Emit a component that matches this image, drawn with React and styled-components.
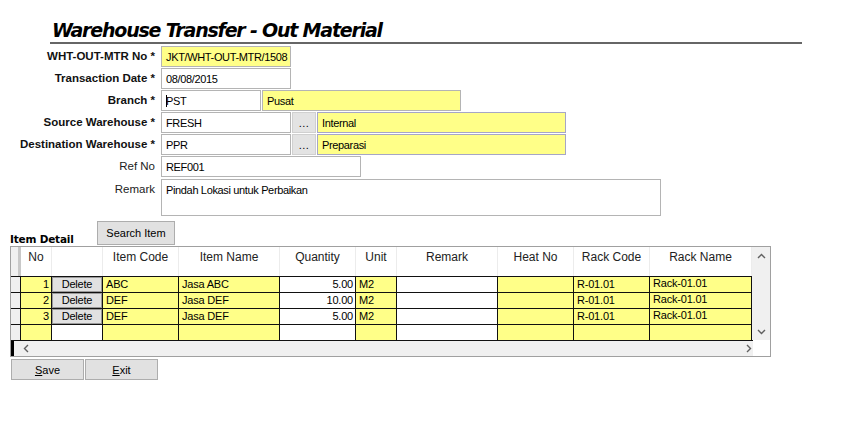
import React from 'react';
import styled, { createGlobalStyle } from 'styled-components';

const GlobalStyle = createGlobalStyle`
  html, body {
    margin: 0;
    padding: 0;
    background: #fff;
    font-family: "Liberation Sans", Arial, sans-serif;
    font-size: 11px;
    color: #000;
  }
`;

const YELLOW = '#ffff88';

const columns = [
    { key: 'no', title: 'No', width: 31, align: 'right', fill: YELLOW },
    { key: 'del', title: '', width: 51, fill: '#fff' },
    { key: 'code', title: 'Item Code', width: 76, fill: YELLOW },
    { key: 'name', title: 'Item Name', width: 101, fill: YELLOW },
    { key: 'qty', title: 'Quantity', width: 76, align: 'right', fill: '#fff' },
    { key: 'unit', title: 'Unit', width: 41, fill: YELLOW },
    { key: 'remark', title: 'Remark', width: 101, fill: '#fff' },
    { key: 'heat', title: 'Heat No', width: 76, fill: YELLOW },
    { key: 'rack', title: 'Rack Code', width: 76, fill: YELLOW },
    { key: 'rackName', title: 'Rack Name', width: 102, fill: YELLOW, raise: true },
];

const rows = [
    { no: '1', code: 'ABC', name: 'Jasa ABC', qty: '5.00', unit: 'M2', remark: '', heat: '', rack: 'R-01.01', rackName: 'Rack-01.01' },
    { no: '2', code: 'DEF', name: 'Jasa DEF', qty: '10.00', unit: 'M2', remark: '', heat: '', rack: 'R-01.01', rackName: 'Rack-01.01' },
    { no: '3', code: 'DEF', name: 'Jasa DEF', qty: '5.00', unit: 'M2', remark: '', heat: '', rack: 'R-01.01', rackName: 'Rack-01.01' },
    { blank: true },
];

const Chevron = ({ dir }) => {
    const pts = {
        up: '1,6 4.5,2.5 8,6',
        down: '1,3 4.5,6.5 8,3',
        left: '6,1 2.5,4.5 6,8',
        right: '3,1 6.5,4.5 3,8',
    }[dir];
    return (
        <svg width="9" height="9" viewBox="0 0 9 9">
            <polyline points={pts} fill="none" stroke="#606060" strokeWidth="1.4" />
        </svg>
    );
};

const App = () => {
    return (
        <Page>
            <GlobalStyle />
            <Header>
                <Title>Warehouse Transfer - Out Material</Title>
            </Header>

            <Form>
                <Label $bold>WHT-OUT-MTR No *</Label>
                <Fields>
                    <Input $w={130} $fill={YELLOW}>JKT/WHT-OUT-MTR/1508</Input>
                </Fields>

                <Label $bold>Transaction Date *</Label>
                <Fields>
                    <Input $w={130}>08/08/2015</Input>
                </Fields>

                <Label $bold>Branch *</Label>
                <Fields>
                    <Input $w={100}><Caret />PST</Input>
                    <Input $w={199} $fill={YELLOW} $gap={1}>Pusat</Input>
                </Fields>

                <Label $bold>Source Warehouse *</Label>
                <Fields>
                    <Input $w={130}>FRESH</Input>
                    <DotsButton>...</DotsButton>
                    <Input $w={249} $fill={YELLOW} $blue>Internal</Input>
                </Fields>

                <Label $bold>Destination Warehouse *</Label>
                <Fields>
                    <Input $w={130}>PPR</Input>
                    <DotsButton>...</DotsButton>
                    <Input $w={249} $fill={YELLOW} $blue>Preparasi</Input>
                </Fields>

                <Label>Ref No</Label>
                <Fields>
                    <Input $w={200}>REF001</Input>
                </Fields>

                <Label $top>Remark</Label>
                <Fields>
                    <TextArea>Pindah Lokasi untuk Perbaikan</TextArea>
                </Fields>
            </Form>

            <DetailBar>
                <SectionTitle>Item Detail</SectionTitle>
                <GreyButton $w={78} $h={24}>Search Item</GreyButton>
            </DetailBar>

            <GridPanel>
                <GridMain>
                    <GridBody>
                        <HeaderRow>
                            <RowHeadCell $head />
                            {columns.map((c) => (
                                <HeadCell key={c.key} $w={c.width}>{c.title}</HeadCell>
                            ))}
                        </HeaderRow>
                        {rows.map((r, i) => (
                            <DataRow key={i}>
                                <RowHeadCell />
                                {columns.map((c) => (
                                    <Cell
                                        key={c.key}
                                        $w={c.width}
                                        $fill={c.fill}
                                        $align={c.align}
                                        $raise={c.raise}
                                    >
                                        {c.key === 'del'
                                            ? !r.blank && <DeleteButton>Delete</DeleteButton>
                                            : r[c.key]}
                                    </Cell>
                                ))}
                            </DataRow>
                        ))}
                    </GridBody>
                    <VScroll>
                        <Chevron dir="up" />
                        <Chevron dir="down" />
                    </VScroll>
                </GridMain>
                <HScroll>
                    <Marker />
                    <Chevron dir="left" />
                    <Spacer />
                    <Chevron dir="right" />
                </HScroll>
            </GridPanel>

            <Actions>
                <GreyButton $w={73} $h={21}><u>S</u>ave</GreyButton>
                <GreyButton $w={73} $h={21}><u>E</u>xit</GreyButton>
            </Actions>
        </Page>
    );
};

const Page = styled.div`
    width: 850px;
    height: 425px;
    overflow: hidden;
    padding-top: 18px;
    box-sizing: border-box;
`;

const Header = styled.div`
    margin-left: 50px;
    width: 750px;
    border-bottom: 2px solid #666;
    padding-left: 2px;
`;

const Title = styled.h1`
    margin: 0;
    font-family: "DejaVu Sans", Verdana, sans-serif;
    font-weight: bold;
    font-style: italic;
    font-size: 19px;
    line-height: 24px;
    letter-spacing: -1.2px;
    color: #000;
`;

const Form = styled.div`
    display: grid;
    grid-template-columns: 156px 1fr;
    row-gap: 1px;
    margin-top: 2px;
`;

const Label = styled.div`
    text-align: right;
    padding-right: 1px;
    font-size: 11.5px;
    font-weight: ${(p) => (p.$bold ? 'bold' : 'normal')};
    color: ${(p) => (p.$bold ? '#111' : '#222')};
    line-height: 21px;
    align-self: ${(p) => (p.$top ? 'start' : 'center')};
    padding-top: ${(p) => (p.$top ? '1px' : '0')};
    white-space: nowrap;
`;

const Fields = styled.div`
    display: flex;
    align-items: stretch;
    padding-left: 5px;
`;

const Input = styled.div`
    width: ${(p) => p.$w}px;
    height: 21px;
    box-sizing: border-box;
    margin-left: ${(p) => p.$gap || 0}px;
    border: 1px solid ${(p) => (p.$blue ? '#a6a6c6' : '#b4b4b4')};
    background: ${(p) => p.$fill || '#fff'};
    padding-left: 4px;
    display: flex;
    align-items: center;
    font-size: 11px;
    letter-spacing: -0.35px;
    white-space: nowrap;
    overflow: hidden;
`;

const Caret = styled.span`
    display: inline-block;
    width: 1px;
    height: 12px;
    background: #000;
    margin-right: -1px;
`;

const DotsButton = styled.div`
    width: 24px;
    height: 21px;
    box-sizing: border-box;
    margin: 0 1px;
    background: #e3e3e3;
    border: 1px solid #d0d0d0;
    display: flex;
    align-items: center;
    justify-content: center;
    font-size: 11px;
    letter-spacing: 0.5px;
`;

const TextArea = styled.div`
    width: 500px;
    height: 37px;
    margin-top: 1px;
    box-sizing: border-box;
    border: 1px solid #b4b4b4;
    padding: 4px 4px;
    font-size: 11px;
    letter-spacing: -0.35px;
`;

const DetailBar = styled.div`
    display: flex;
    align-items: flex-end;
    margin-top: 4px;
    padding-left: 10px;
    height: 25px;
`;

const SectionTitle = styled.div`
    font-family: "DejaVu Sans", Verdana, sans-serif;
    font-weight: bold;
    font-size: 10.5px;
    width: 87px;
    line-height: 12px;
    margin-bottom: 0;
    letter-spacing: -0.2px;
`;

const GreyButton = styled.div`
    width: ${(p) => p.$w}px;
    height: ${(p) => p.$h}px;
    box-sizing: border-box;
    background: #e1e1e1;
    border: 1px solid #adadad;
    display: flex;
    align-items: center;
    justify-content: center;
    font-size: 11px;
    u {
        text-decoration: underline;
    }
`;

const GridPanel = styled.div`
    margin-left: 10px;
    margin-top: 1px;
    width: 761px;
    box-sizing: border-box;
    border: 1px solid #a0a0a0;
    display: flex;
    flex-direction: column;
`;

const GridMain = styled.div`
    display: flex;
`;

const GridBody = styled.div`
    display: flex;
    flex-direction: column;
`;

const HeaderRow = styled.div`
    display: flex;
    height: 29px;
    background: #fff;
`;

const DataRow = styled.div`
    display: flex;
    height: 16px;
    box-sizing: border-box;
    border-top: 1px solid #111;
`;

const RowHeadCell = styled.div`
    width: 10px;
    flex: none;
    box-sizing: border-box;
    background: #f0f0f0;
    border-right: ${(p) => (p.$head ? '3px solid #c8c8c8' : '1px solid #111')};
`;

const HeadCell = styled.div`
    width: ${(p) => p.$w}px;
    flex: none;
    box-sizing: border-box;
    border-right: 1px solid #ececec;
    text-align: center;
    font-size: 12px;
    color: #222;
    padding-top: 3px;
`;

const Cell = styled.div`
    width: ${(p) => p.$w}px;
    flex: none;
    box-sizing: border-box;
    border-right: 1px solid #111;
    background: ${(p) => p.$fill};
    padding: ${(p) => (p.$align === 'right' ? '0 2px 0 0' : '0 0 0 3px')};
    font-size: 11px;
    letter-spacing: -0.2px;
    line-height: ${(p) => (p.$raise ? '12px' : '15px')};
    white-space: nowrap;
    overflow: hidden;
    display: flex;
    justify-content: ${(p) => (p.$align === 'right' ? 'flex-end' : 'flex-start')};
    &:has(> div) {
        padding: 0;
    }
`;

const DeleteButton = styled.div`
    width: 100%;
    height: 100%;
    box-sizing: border-box;
    background: #e1e1e1;
    border: 1px solid #9a9a9a;
    display: flex;
    align-items: center;
    justify-content: center;
    font-size: 11px;
    line-height: 13px;
`;

const VScroll = styled.div`
    width: 18px;
    flex: none;
    background: #f0f0f0;
    display: flex;
    flex-direction: column;
    justify-content: space-between;
    align-items: center;
    padding: 5px 0 4px;
    box-sizing: border-box;
`;

const HScroll = styled.div`
    height: 16px;
    width: 742px;
    box-sizing: border-box;
    background: #f0f0f0;
    display: flex;
    align-items: center;
    border-top: 1px solid #111;
`;

const Marker = styled.div`
    width: 3px;
    height: 100%;
    background: #000;
    margin-right: 8px;
`;

const Spacer = styled.div`
    flex: 1;
`;

const Actions = styled.div`
    display: flex;
    gap: 1px;
    margin-left: 11px;
    margin-top: 2px;
`;

export default App;
